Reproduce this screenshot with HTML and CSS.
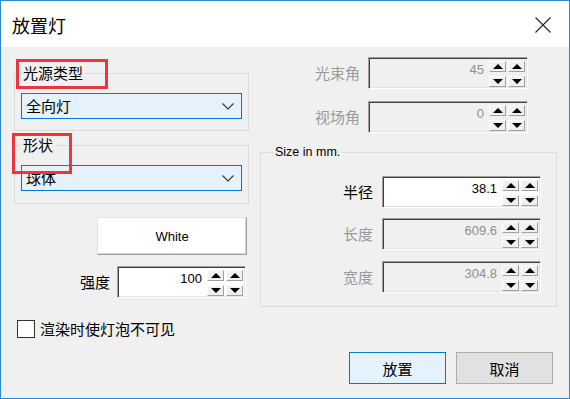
FILE: index.html
```html
<!DOCTYPE html>
<html lang="zh-CN">
<head>
<meta charset="utf-8">
<title>放置灯</title>
<link rel="stylesheet" href="styles.css">
</head>
<body>
<div class="window">
  <div class="titlebar">
    <span class="title">放置灯</span>
    <svg class="close" width="16" height="16" viewBox="0 0 16 16"><path d="M0.5 0.5 L15.5 15.5 M15.5 0.5 L0.5 15.5" stroke="#222" stroke-width="1.1" fill="none"/></svg>
  </div>
  <div class="content">
    <div class="col-left">
      <fieldset class="group g1">
        <legend class="cjk-legend"><span class="mark mark1"></span>光源类型</legend>
        <div class="combo"><span>全向灯</span><svg width="12" height="7" viewBox="0 0 12 7"><path d="M0.5 0.5 L6 6 L11.5 0.5" stroke="#333" stroke-width="1.1" fill="none"/></svg></div>
      </fieldset>
      <fieldset class="group g2">
        <legend class="cjk-legend"><span class="mark mark2"></span>形状</legend>
        <div class="combo"><span>球体</span><svg width="12" height="7" viewBox="0 0 12 7"><path d="M0.5 0.5 L6 6 L11.5 0.5" stroke="#333" stroke-width="1.1" fill="none"/></svg></div>
      </fieldset>
      <button class="color-btn">White</button>
      <div class="row row-intensity">
        <span class="lbl">强度</span>
        <div class="spin w-int"><span class="val">100</span><span class="arrows"><i class="ab up"></i><i class="ab up"></i><i class="ab dn"></i><i class="ab dn"></i></span></div>
      </div>
      <label class="check"><span class="box"></span><span>渲染时使灯泡不可见</span></label>
    </div>
    <div class="col-right">
      <div class="row row-top">
        <span class="lbl dis">光束角</span>
        <div class="spin off w-top"><span class="val">45</span><span class="arrows"><i class="ab up"></i><i class="ab up"></i><i class="ab dn"></i><i class="ab dn"></i></span></div>
      </div>
      <div class="row row-top r2">
        <span class="lbl dis">视场角</span>
        <div class="spin off w-top"><span class="val">0</span><span class="arrows"><i class="ab up"></i><i class="ab up"></i><i class="ab dn"></i><i class="ab dn"></i></span></div>
      </div>
      <fieldset class="group size">
        <legend class="lat-legend">Size in mm.</legend>
        <div class="row srow">
          <span class="lbl">半径</span>
          <div class="spin w-size"><span class="val">38.1</span><span class="arrows"><i class="ab up"></i><i class="ab up"></i><i class="ab dn"></i><i class="ab dn"></i></span></div>
        </div>
        <div class="row srow s2">
          <span class="lbl dis">长度</span>
          <div class="spin off w-size"><span class="val">609.6</span><span class="arrows"><i class="ab up"></i><i class="ab up"></i><i class="ab dn"></i><i class="ab dn"></i></span></div>
        </div>
        <div class="row srow s3">
          <span class="lbl dis">宽度</span>
          <div class="spin off w-size"><span class="val">304.8</span><span class="arrows"><i class="ab up"></i><i class="ab up"></i><i class="ab dn"></i><i class="ab dn"></i></span></div>
        </div>
      </fieldset>
      <div class="actions">
        <button class="btn primary">放置</button>
        <button class="btn">取消</button>
      </div>
    </div>
  </div>
</div>
</body>
</html>
```
FILE: styles.css
```css
html, body {
  margin: 0;
  padding: 0;
  background: #f0f0f0;
}
body {
  font-family: "Noto Sans CJK SC", "Noto Sans", sans-serif;
  font-size: 15px;
  color: #000;
}
.window {
  width: 570px;
  height: 399px;
  box-sizing: border-box;
  border: 1px solid #2b87d6;
  background: #f0f0f0;
  display: flex;
  flex-direction: column;
}
.titlebar {
  height: 46px;
  background: #fff;
  display: flex;
  align-items: center;
  justify-content: space-between;
  padding: 0 18px 0 11px;
  flex: none;
}
.title {
  font-size: 18px;
  line-height: 22px;
  margin-top: 2px;
}
.close {
  margin-top: 2px;
}
.content {
  flex: 1;
  display: flex;
  padding-left: 13px;
  column-gap: 11px;
}
.col-left {
  width: 235px;
  display: flex;
  flex-direction: column;
}
.col-right {
  width: 297px;
  display: flex;
  flex-direction: column;
}
.group {
  margin: 0;
  border: 1px solid #dcdcdc;
  min-width: 0;
}
.g1 {
  margin-top: 17px;
  padding: 11px 6px 11px 6px;
}
.g2 {
  margin-top: 5px;
  padding: 11px 6px 12px 6px;
}
.cjk-legend {
  position: relative;
  padding: 0 2px;
  font-size: 15px;
  line-height: 18px;
}
.lat-legend {
  padding: 0 2px;
  font-family: "Liberation Sans", Arial, sans-serif;
  font-size: 12.5px;
  line-height: 16px;
  margin-left: 2px;
}
.mark {
  position: absolute;
  border: 3px solid #e8383d;
  box-sizing: border-box;
}
.mark1 {
  left: -5px;
  top: -5px;
  width: 92px;
  height: 30px;
}
.mark2 {
  left: -9px;
  top: -3px;
  width: 60px;
  height: 41px;
}
.combo {
  height: 26px;
  box-sizing: border-box;
  border: 1px solid #0078d7;
  background: #e5f1fb;
  display: flex;
  align-items: center;
  justify-content: space-between;
  padding: 0 7px 0 4px;
  font-size: 15px;
  line-height: 18px;
}
.combo svg {
  margin-top: 1px;
}
.color-btn {
  margin: 13px 0 0 83px;
  width: 150px;
  height: 38px;
  box-sizing: border-box;
  background: #fff;
  border-style: solid;
  border-width: 1px;
  border-color: #e3e3e3 #a0a0a0 #a0a0a0 #e3e3e3;
  box-shadow: inset -1px -1px #d4d4d4;
  font-family: "Liberation Sans", Arial, sans-serif;
  font-size: 13px;
  color: #000;
  padding: 0;
}
.row {
  display: flex;
  align-items: center;
  justify-content: flex-end;
}
.lbl {
  font-size: 15px;
  line-height: 18px;
  margin-right: 7px;
}
.lbl.dis {
  color: #9a9a9a;
}
.row-intensity {
  margin-top: 11px;
  margin-right: 3px;
}
.spin {
  display: flex;
  align-items: flex-start;
  box-sizing: border-box;
  height: 32px;
  border-style: solid;
  border-width: 1px;
  border-color: #a0a0a0 #fff #fff #a0a0a0;
  box-shadow: inset 1px 1px #404040, inset -1px -1px #e3e3e3;
  background: #fff;
  padding: 2px 2px 0 0;
}
.spin.off {
  background: #f0f0f0;
}
.val {
  flex: 1;
  text-align: right;
  font-family: "Liberation Sans", Arial, sans-serif;
  font-size: 13px;
  line-height: 15px;
  padding-top: 2px;
  padding-right: 5px;
}
.spin.off .val {
  color: #8f8f8f;
}
.arrows {
  display: grid;
  grid-template-columns: 17px 17px;
  grid-auto-rows: 11px;
  column-gap: 2px;
  row-gap: 4px;
  margin-top: 1px;
}
.ab {
  display: flex;
  align-items: center;
  justify-content: center;
  background: #f0f0f0;
  box-sizing: border-box;
  border-style: solid;
  border-width: 1px;
  border-color: #fff #a0a0a0 #a0a0a0 #fff;
}
.ab::before {
  content: "";
  width: 0;
  height: 0;
  border-left: 5px solid transparent;
  border-right: 5px solid transparent;
}
.ab.up::before {
  border-bottom: 5px solid #000;
}
.ab.dn::before {
  border-top: 5px solid #000;
}
.w-int {
  width: 129px;
}
.w-top {
  width: 160px;
}
.w-size {
  width: 159px;
}
.row-top {
  margin-top: 10px;
  padding-right: 29px;
}
.row-top .lbl {
  margin-right: 8px;
}
.r2 {
  margin-top: 12px;
}
.size {
  margin-top: 11px;
  padding: 16px 15px 13px 10px;
}
.srow .lbl {
  margin-right: 9px;
}
.s2 {
  margin-top: 10px;
}
.s3 {
  margin-top: 11px;
}
.check {
  display: flex;
  align-items: center;
  margin: 22px 0 0 3px;
  font-size: 15px;
  line-height: 18px;
}
.check .box {
  width: 18px;
  height: 18px;
  box-sizing: border-box;
  border: 1px solid #333;
  background: #fff;
  margin-right: 5px;
}
.actions {
  display: flex;
  justify-content: flex-end;
  column-gap: 10px;
  margin-top: 45px;
  padding-right: 4px;
}
.btn {
  width: 97px;
  height: 32px;
  box-sizing: border-box;
  border: 1px solid #adadad;
  background: #e1e1e1;
  font-family: "Noto Sans CJK SC", sans-serif;
  font-size: 15px;
  color: #000;
  padding: 0;
}
.btn.primary {
  border-color: #0078d7;
  background: #e5f1fb;
}
```
